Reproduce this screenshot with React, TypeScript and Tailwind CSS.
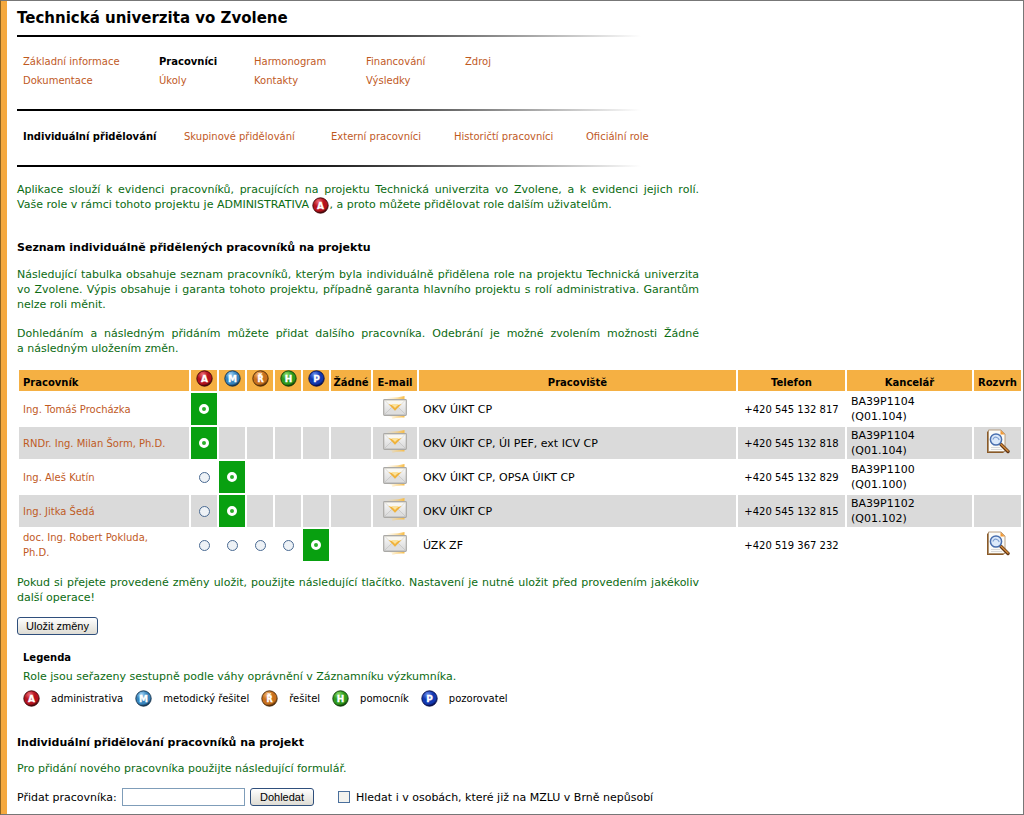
import type { ReactNode } from "react";

type Role = "A" | "M" | "Ř" | "H" | "P";

const roles: { id: Role; label: string; light: string; mid: string; dark: string }[] = [
  { id: "A", label: "administrativa", light: "#f0707a", mid: "#b5121c", dark: "#3c0608" },
  { id: "M", label: "metodický řešitel", light: "#a8d8f8", mid: "#3784bd", dark: "#12304a" },
  { id: "Ř", label: "řešitel", light: "#f8c080", mid: "#c8701c", dark: "#4a2808" },
  { id: "H", label: "pomocník", light: "#90e070", mid: "#2f9a1c", dark: "#0c3a08" },
  { id: "P", label: "pozorovatel", light: "#7090f0", mid: "#1238b0", dark: "#060c48" },
];

type Worker = {
  name: string;
  role: Role;
  place: string;
  phone: string;
  office?: [string, string];
  schedule?: boolean;
};

const workers: Worker[] = [
  { name: "Ing. Tomáš Procházka", role: "A", place: "OKV ÚIKT CP", phone: "+420 545 132 817", office: ["BA39P1104", "(Q01.104)"] },
  { name: "RNDr. Ing. Milan Šorm, Ph.D.", role: "A", place: "OKV ÚIKT CP, ÚI PEF, ext ICV CP", phone: "+420 545 132 818", office: ["BA39P1104", "(Q01.104)"], schedule: true },
  { name: "Ing. Aleš Kutín", role: "M", place: "OKV ÚIKT CP, OPSA ÚIKT CP", phone: "+420 545 132 829", office: ["BA39P1100", "(Q01.100)"] },
  { name: "Ing. Jitka Šedá", role: "M", place: "OKV ÚIKT CP", phone: "+420 545 132 815", office: ["BA39P1102", "(Q01.102)"] },
  { name: "doc. Ing. Robert Pokluda, Ph.D.", role: "P", place: "ÚZK ZF", phone: "+420 519 367 232", schedule: true },
];

function RoleIcon({ id, className = "" }: { id: Role; className?: string }) {
  const role = roles.find((r) => r.id === id)!;
  const gradient = `ball-${role.label.slice(0, 3)}`;
  return (
    <svg viewBox="0 0 17 17" className={`inline-block size-[17px] shrink-0 ${className}`} role="img" aria-label={role.label}>
      <defs>
        <radialGradient id={gradient} cx="0.38" cy="0.25" r="0.75">
          <stop offset="0" stopColor={role.light} />
          <stop offset="0.45" stopColor={role.mid} />
          <stop offset="0.8" stopColor={role.mid} />
          <stop offset="1" stopColor={role.dark} />
        </radialGradient>
      </defs>
      <circle cx="8.5" cy="8.5" r="7.7" fill={`url(#${gradient})`} stroke={role.dark} strokeWidth="0.9" />
      <text x="8.5" y="12" textAnchor="middle" fontSize={id === "Ř" ? 8 : 9} fontWeight="bold" fill="#fff" stroke="#fff" strokeWidth="0.3" fontFamily="DejaVu Sans, sans-serif">
        {id}
      </text>
    </svg>
  );
}

function MailIcon() {
  return (
    <svg viewBox="0 0 24 24" className="block h-6 w-6" aria-hidden="true">
      <defs>
        <linearGradient id="mail-sweep" x1="0" x2="1">
          <stop offset="0" stopColor="#fbd98a" stopOpacity="0" />
          <stop offset="1" stopColor="#f7bb45" />
        </linearGradient>
        <linearGradient id="mail-paper" x1="0" x2="0" y1="0" y2="1">
          <stop offset="0" stopColor="#fbfbfb" />
          <stop offset="1" stopColor="#d6d6d6" />
        </linearGradient>
      </defs>
      <path d="M3 2.5Q14 3 21.5 1L21.5 5H6Z" fill="url(#mail-sweep)" />
      <path d="M4 20H21.5V22.5Q13 22 9 24Q11 22 4 21Z" fill="url(#mail-sweep)" />
      <rect x="0.7" y="4.7" width="22.6" height="15.6" rx="0.8" fill="url(#mail-paper)" stroke="#aaa9a6" strokeWidth="1.2" />
      <path d="M1.5 19.5L9 12L12 14L15 12L22.5 19.5Z" fill="#dedede" stroke="#bdbdbd" strokeWidth="0.6" />
      <path d="M2 5.5L12 15.5L22 5.5Z" fill="#f8f7f2" stroke="#d2cfc4" strokeWidth="0.6" />
      <path d="M5.5 9L12 15.8L18.5 9L12 11Z" fill="#f0b23a" />
      <path d="M8 9H16L12 13Z" fill="#fbe29c" />
    </svg>
  );
}

function ScheduleIcon() {
  return (
    <svg viewBox="0 0 24 25" className="block h-[25px] w-6" aria-hidden="true">
      <path d="M2.5 1.5L1 3V24H17L19 22.5Z" fill="#8a5a28" />
      <path d="M2.5 1H15L19 5V22.5H2.5Z" fill="#fbfbf8" stroke="#a88a68" strokeWidth="0.8" />
      <path d="M14.5 1L19 5.5H14.5Z" fill="#f09a38" />
      <path d="M5 18.5H14M5 20.5H16" stroke="#cfcfcf" strokeWidth="0.8" />
      <path d="M15 15.5L22 22.5" stroke="#5e3414" strokeWidth="3.4" strokeLinecap="round" />
      <path d="M15 15.2L22 22" stroke="#d28a3c" strokeWidth="1.6" strokeLinecap="round" />
      <circle cx="10" cy="10.5" r="5.6" fill="#dbe9fa" stroke="#486eae" strokeWidth="1.5" />
      <path d="M6.8 10.5Q8.5 7 11 8.5Q12.5 9 13.2 11" fill="none" stroke="#7f9fd0" strokeWidth="1.2" />
    </svg>
  );
}

function Rule() {
  return <div className="h-[2px] max-w-[624px] bg-linear-to-r from-black from-35% to-white" />;
}

function NavLink({ children, active = false }: { children: ReactNode; active?: boolean }) {
  return (
    <a href="#" aria-current={active ? "page" : undefined} className={active ? "font-bold text-black" : "text-[#bf5a1f]"}>
      {children}
    </a>
  );
}

const th = "bg-[#f5b043] px-0 pt-1 pb-0 text-center text-[10px] font-bold";
const buttonStyle =
  "h-[18px] rounded-[3px] border border-[#2f4f7c] bg-linear-to-b from-white to-[#dedcd4] text-center font-['Liberation_Sans',sans-serif] text-[11px] leading-[15px]";

export default function App() {
  return (
    <div className="min-h-screen border border-[#777] border-l-[#8f6420] bg-white font-['DejaVu_Sans',sans-serif] text-[11px] leading-[15px] text-black">
      <main className="min-h-[813px] border-l-6 border-[#f5a93f] pl-[10px]">
        <h1 className="pt-[7px] text-[15px] leading-5 font-bold">Technická univerzita vo Zvolene</h1>
        <div className="pt-[7px]">
          <Rule />
        </div>
        <nav aria-label="Projekt" className="grid grid-cols-[136px_95px_112px_99px_auto] gap-y-1 px-[6px] pt-[17px] pb-[21px] text-[10px]">
          <NavLink>Základní informace</NavLink>
          <NavLink active>Pracovníci</NavLink>
          <NavLink>Harmonogram</NavLink>
          <NavLink>Financování</NavLink>
          <NavLink>Zdroj</NavLink>
          <NavLink>Dokumentace</NavLink>
          <NavLink>Úkoly</NavLink>
          <NavLink>Kontakty</NavLink>
          <NavLink>Výsledky</NavLink>
        </nav>
        <Rule />
        <nav aria-label="Pracovníci" className="grid grid-cols-[161px_147px_123px_132px_auto] px-[6px] pt-[18px] pb-[21px] text-[10px]">
          <NavLink active>Individuální přidělování</NavLink>
          <NavLink>Skupinové přidělování</NavLink>
          <NavLink>Externí pracovníci</NavLink>
          <NavLink>Historičtí pracovníci</NavLink>
          <NavLink>Oficiální role</NavLink>
        </nav>
        <Rule />

        <p className="max-w-[682px] pt-[15px] text-justify text-[#0b6b12]">
          <span>
            Aplikace slouží k evidenci pracovníků, pracujících na projektu Technická univerzita vo Zvolene, a k evidenci jejich rolí.
          </span>{" "}
          <span>Vaše&nbsp;role v rámci tohoto projektu je ADMINISTRATIVA</span>{" "}
          <RoleIcon id="A" className="-my-1 align-middle" />
          <span>, a proto můžete přidělovat role dalším uživatelům.</span>
        </p>

        <h2 className="pt-7 font-bold">Seznam individuálně přidělených pracovníků na projektu</h2>
        <p className="max-w-[682px] pt-3 text-justify text-[#0b6b12]">
          Následující tabulka obsahuje seznam pracovníků, kterým byla individuálně přidělena role na projektu Technická univerzita
          vo&nbsp;Zvolene. Výpis obsahuje i garanta tohoto projektu, případně garanta hlavního projektu s rolí administrativa. Garantům
          nelze roli měnit.
        </p>
        <p className="max-w-[682px] pt-[14px] text-justify text-[#0b6b12]">
          Dohledáním a následným přidáním můžete přidat dalšího pracovníka. Odebrání je možné zvolením možnosti Žádné a&nbsp;následným
          uložením změn.
        </p>

        <table className="mt-3 w-full table-fixed border-separate border-spacing-[2px]">
          <colgroup>
            <col className="w-[170px]" />
            <col className="w-[26px]" />
            <col className="w-[26px]" />
            <col className="w-[26px]" />
            <col className="w-[26px]" />
            <col className="w-[26px]" />
            <col className="w-[40px]" />
            <col className="w-[44px]" />
            <col />
            <col className="w-[107px]" />
            <col className="w-[125px]" />
            <col className="w-[47px]" />
          </colgroup>
          <thead>
            <tr className="h-[21px]">
              <th className="bg-[#f5b043] px-1 pt-1 pb-0 text-left text-[10px] font-bold">Pracovník</th>
              {roles.map((r) => (
                <th key={r.id} className="bg-[#f5b043] p-0 align-top">
                  <RoleIcon id={r.id} className="mx-auto block" />
                </th>
              ))}
              <th className={th}>Žádné</th>
              <th className={th}>E-mail</th>
              <th className={th}>Pracoviště</th>
              <th className={th}>Telefon</th>
              <th className={th}>Kancelář</th>
              <th className={th}>Rozvrh</th>
            </tr>
          </thead>
          <tbody>
            {workers.map((w, row) => {
              const rank = roles.findIndex((r) => r.id === w.role);
              return (
                <tr key={w.name} className="h-8 even:bg-[#dadada]">
                  <td className="py-0 pr-4 pl-1 text-[10px]">
                    <a href="#" className="text-[#bf5a1f]">
                      {w.name}
                    </a>
                  </td>
                  {roles.map((r, i) => (
                    <td key={r.id} className={i === rank ? "bg-[#08a010] p-0" : "p-0"}>
                      {i <= rank && (
                        <input
                          type="radio"
                          name={`role-${row}`}
                          defaultChecked={i === rank}
                          aria-label={`${w.name}: ${r.label}`}
                          className="mx-auto block size-[11px] appearance-none rounded-full border border-[#4a6a92] bg-[#eef2f6] checked:size-[10px] checked:border-[3px] checked:border-white checked:bg-[#2bb02b]"
                        />
                      )}
                    </td>
                  ))}
                  <td />
                  <td className="p-0">
                    <a href="#" aria-label={`E-mail: ${w.name}`} className="mx-auto block w-6 pb-1">
                      <MailIcon />
                    </a>
                  </td>
                  <td className="px-1 py-0">{w.place}</td>
                  <td className="px-1 py-0 text-center text-[10px] whitespace-nowrap">{w.phone}</td>
                  <td className="px-1 py-0">
                    {w.office?.[0]}
                    <br />
                    {w.office?.[1]}
                  </td>
                  <td className="p-0">
                    {w.schedule && (
                      <a href="#" aria-label={`Rozvrh: ${w.name}`} className="mx-auto block w-6 pb-1">
                        <ScheduleIcon />
                      </a>
                    )}
                  </td>
                </tr>
              );
            })}
          </tbody>
        </table>

        <p className="max-w-[682px] pt-3 text-justify text-[#0b6b12]">
          Pokud si přejete provedené změny uložit, použijte následující tlačítko. Nastavení je nutné uložit před provedením jakékoliv
          další operace!
        </p>
        <button type="button" className={`mt-3 block w-[81px] ${buttonStyle}`}>
          Uložit změny
        </button>

        <section className="px-[6px] pt-[15px]">
          <h3 className="text-[10px] leading-[15px] font-bold">Legenda</h3>
          <p className="pt-1 text-[#0b6b12]">Role jsou seřazeny sestupně podle váhy oprávnění v Záznamníku výzkumníka.</p>
          <ul className="flex items-center gap-3 pt-[6px] text-[10px] leading-[15px]">
            {roles.map((r) => (
              <li key={r.id} className="flex items-center gap-[11px]">
                <RoleIcon id={r.id} />
                {r.label}
              </li>
            ))}
          </ul>
        </section>

        <h2 className="pt-7 font-bold">Individuální přidělování pracovníků na projekt</h2>
        <p className="pt-[11px] text-[#0b6b12]">Pro přidání nového pracovníka použijte následující formulář.</p>
        <form className="flex items-center pt-3" onSubmit={(e) => e.preventDefault()}>
          <label htmlFor="worker" className="w-[105px] whitespace-nowrap">
            Přidat pracovníka:
          </label>
          <input id="worker" type="text" className="h-[18px] w-[123px] border border-[#7f9db9] bg-white px-1" />
          <button type="submit" className={`ml-[5px] w-[64px] ${buttonStyle}`}>
            Dohledat
          </button>
          <input id="former" type="checkbox" className="ml-6 size-3 appearance-none border border-[#4a6f9c] bg-[#f2f2ee] checked:bg-[#2bb02b]" />
          <label htmlFor="former" className="pl-[6px]">
            Hledat i v osobách, které již na MZLU v Brně nepůsobí
          </label>
        </form>
      </main>
    </div>
  );
}
